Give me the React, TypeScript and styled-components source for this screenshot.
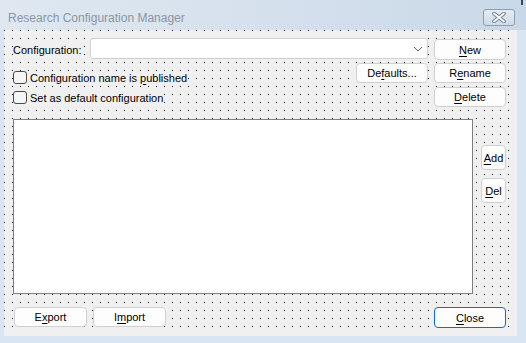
import styled, { createGlobalStyle } from "styled-components";

const GlobalStyle = createGlobalStyle`
  html, body {
    margin: 0;
    padding: 0;
    background: #ffffff;
  }
  body {
    font-family: "Liberation Sans", Arial, sans-serif;
  }
  * {
    box-sizing: border-box;
  }
`;

const Window = styled.div`
  width: 526px;
  height: 343px;
  background: #d9e5f2;
  display: flex;
  flex-direction: column;
  overflow: hidden;
`;

const TitleBar = styled.div`
  position: relative;
  height: 30px;
  flex: none;
  display: flex;
  align-items: flex-start;
  justify-content: space-between;
  padding: 0 11px 0 8px;
  background: linear-gradient(90deg, #dfe8f1 0%, #d3dfec 60%, #c9d8e8 100%);

  &::after {
    content: "";
    position: absolute;
    right: 3px;
    top: 0;
    width: 2px;
    height: 5px;
    background: #3c4650;
  }
`;

const Title = styled.span`
  margin-top: 11px;
  font-size: 12px;
  line-height: 14px;
  color: #8a96a3;
  white-space: nowrap;
`;

const CloseBox = styled.div`
  margin-top: 9px;
  width: 32px;
  height: 17px;
  border: 1px solid #8e9db0;
  border-radius: 3px;
  background: linear-gradient(#e4ecf5, #cfdbe8);
  display: flex;
  align-items: center;
  justify-content: center;
`;

const Client = styled.div`
  margin: 0 9px 0 4px;
  height: 306px;
  flex: none;
  background: #f0f0f0;
`;

const Surface = styled.div`
  width: 506px;
  height: 297px;
  padding: 9px 4px 0 8px;
  background-color: #f0f0f0;
  background-image: conic-gradient(from 270deg at 1px 1px, #000 25%, transparent 0);
  background-size: 8px 8px;
  display: flex;
  flex-direction: column;
`;

const TopGrid = styled.div`
  display: grid;
  grid-template-columns: 78px 266px 73px 5px 72px;
  grid-template-rows: 20px 20px 20px;
  row-gap: 4px;
`;

const Label = styled.span`
  grid-column: 1;
  grid-row: 1;
  align-self: center;
  margin: 1px 0 0 1px;
  font-size: 11px;
  color: #000;
  background: #f0f0f0;
  justify-self: start;
`;

const Combo = styled.div`
  grid-column: 2 / 4;
  grid-row: 1;
  height: 21px;
  margin-top: -1px;
  margin-right: 1px;
  background: #ffffff;
  border: 1px solid #d2d2d2;
  border-radius: 3px;
  display: flex;
  align-items: center;
  justify-content: flex-end;
  padding-right: 4px;
`;

const Checks = styled.div`
  grid-column: 1 / 3;
  grid-row: 2 / 4;
  padding: 8px 0 0 1px;
  display: flex;
  flex-direction: column;
  gap: 7px;
  align-items: flex-start;
`;

const CheckRow = styled.label`
  display: flex;
  align-items: center;
  gap: 3px;
  height: 13px;
  font-size: 11px;
  color: #000;
  background: #f0f0f0;
  padding-right: 1px;

  u {
    text-underline-offset: 2px;
  }
`;

const Box = styled.span`
  width: 14px;
  height: 13px;
  flex: none;
  border: 1px solid #4a4a4a;
  border-radius: 3px;
  background: #f5f5f5;
`;

const Button = styled.button<{ $col?: number; $row?: number; $w?: number; $h?: number; $primary?: boolean }>`
  grid-column: ${(p) => p.$col ?? "auto"};
  grid-row: ${(p) => p.$row ?? "auto"};
  width: ${(p) => p.$w ?? 72}px;
  height: ${(p) => p.$h ?? 20}px;
  margin: 0;
  padding: 0;
  font-family: "Liberation Sans", Arial, sans-serif;
  font-size: 11px;
  color: #000;
  background: #fdfdfd;
  border: 1px solid ${(p) => (p.$primary ? "#0a6fce" : "#d0d0d0")};
  border-radius: 4px;
  flex: none;

  u {
    text-underline-offset: 2px;
  }
`;

const Middle = styled.div`
  margin-top: 12px;
  display: flex;
  gap: 8px;
  align-items: flex-start;
`;

const ListBox = styled.div`
  margin-left: 1px;
  width: 461px;
  height: 175px;
  background: #ffffff;
  border: 1px solid #7e7e7e;
`;

const SideButtons = styled.div`
  padding-top: 26px;
  display: flex;
  flex-direction: column;
  gap: 8px;
`;

const Bottom = styled.div`
  margin-top: 13px;
  padding-left: 2px;
  display: flex;
  gap: 6px;
`;

const Spacer = styled.div`
  flex: 1;
`;

const XIcon = () => (
  <svg width="16" height="11" viewBox="0 0 16 11">
    <path d="M3 1.5 L13 9.5 M13 1.5 L3 9.5" stroke="#6f7d8e" strokeWidth="3.6" strokeLinecap="round" fill="none" />
    <path d="M3 1.5 L13 9.5 M13 1.5 L3 9.5" stroke="#ffffff" strokeWidth="1.8" strokeLinecap="round" fill="none" />
  </svg>
);

const Chevron = () => (
  <svg width="10" height="6" viewBox="0 0 10 6">
    <path d="M1 1 L5 5 L9 1" stroke="#606060" strokeWidth="1" fill="none" />
  </svg>
);

export default function App() {
  return (
    <>
      <GlobalStyle />
      <Window>
        <TitleBar>
          <Title>Research Configuration Manager</Title>
          <CloseBox>
            <XIcon />
          </CloseBox>
        </TitleBar>
        <Client>
          <Surface>
            <TopGrid>
              <Label>Configuration:</Label>
              <Combo>
                <Chevron />
              </Combo>
              <Button $col={5} $row={1} $h={21}>
                <u>N</u>ew
              </Button>
              <Checks>
                <CheckRow>
                  <Box />
                  <span>
                    Configuration name is <u>p</u>ublished
                  </span>
                </CheckRow>
                <CheckRow>
                  <Box />
                  <span>Set as default configuration</span>
                </CheckRow>
              </Checks>
              <Button $col={3} $row={2}>
                De<u>f</u>aults...
              </Button>
              <Button $col={5} $row={2}>
                R<u>e</u>name
              </Button>
              <Button $col={5} $row={3}>
                <u>D</u>elete
              </Button>
            </TopGrid>
            <Middle>
              <ListBox />
              <SideButtons>
                <Button $w={25} $h={25}>
                  <u>A</u>dd
                </Button>
                <Button $w={25} $h={25}>
                  <u>D</u>el
                </Button>
              </SideButtons>
            </Middle>
            <Bottom>
              <Button $w={73}>
                E<u>x</u>port
              </Button>
              <Button $w={73}>
                I<u>m</u>port
              </Button>
              <Spacer />
              <Button $w={72} $h={21} $primary>
                <u>C</u>lose
              </Button>
            </Bottom>
          </Surface>
        </Client>
      </Window>
    </>
  );
}
